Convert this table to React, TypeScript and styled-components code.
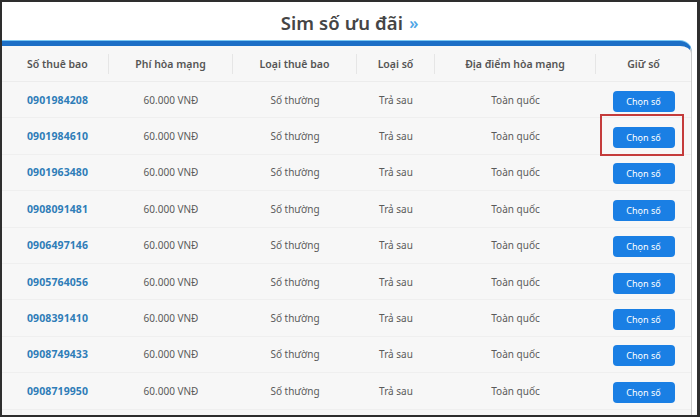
import React from "react";
import styled, { createGlobalStyle } from "styled-components";

const Global = createGlobalStyle`
  html, body { margin: 0; padding: 0; background: #fff; }
  body { font-family: "Noto Sans", "Open Sans", Arial, sans-serif; }
  * { box-sizing: border-box; }
`;

const Frame = styled.div`
  width: 700px;
  height: 417px;
  border: 2px solid #2e2e2e;
  border-right-width: 3px;
  background: #fff;
  display: flex;
  flex-direction: column;
  overflow: hidden;
`;

const TitleBar = styled.div`
  height: 39px;
  display: flex;
  align-items: center;
  justify-content: center;
  gap: 6px;
  padding-top: 2px;
`;

const Title = styled.h2`
  margin: 0;
  font-size: 18.5px;
  font-weight: 600;
  color: #454545;
  letter-spacing: 0.1px;
`;

const Chevron = styled.span`
  font-size: 16px;
  color: #4fa6e6;
  font-weight: 600;
  margin-top: 1px;
`;

const Card = styled.div`
  flex: 1;
  margin-right: 5px;
  background: #f7f7f7;
  border-top: 5px solid #1c6fc6;
  border-right: 1px solid #c9c9c9;
  border-top-right-radius: 12px;
  box-shadow: 0 -1px 0 #7cc8f3;
  display: flex;
  flex-direction: column;
  width: 690px;
`;

const cols = "107px 124px 124px 78px 161px 1fr";

const HeaderRow = styled.div`
  display: grid;
  grid-template-columns: ${cols};
  height: 36px;
  align-items: center;
  border-bottom: 1px solid #ececec;
`;

const HeadCell = styled.div<{ $left?: boolean; $last?: boolean }>`
  font-size: 10.5px;
  font-weight: 600;
  color: #555;
  text-align: ${(p) => (p.$left ? "left" : "center")};
  padding-left: ${(p) => (p.$left ? "25px" : "0")};
  border-right: ${(p) => (p.$last ? "none" : "1px solid #e6e6e6")};
  height: 20px;
  line-height: 20px;
`;

const Row = styled.div`
  display: grid;
  grid-template-columns: ${cols};
  height: 36.4px;
  align-items: center;
  border-bottom: 1px solid #efefef;
`;

const Cell = styled.div`
  font-size: 10px;
  color: #5a5a5a;
  text-align: center;
`;

const NumberCell = styled.div`
  font-size: 10.5px;
  font-weight: 700;
  color: #2f7db8;
  padding-left: 25px;
  letter-spacing: 0.1px;
`;

const ButtonCell = styled.div`
  display: flex;
  justify-content: center;
`;

const ButtonWrap = styled.div`
  position: relative;
`;

const ChooseButton = styled.button`
  width: 62px;
  height: 21px;
  border: none;
  border-radius: 4px;
  background: #1a7fe4;
  color: #fff;
  font-family: inherit;
  font-size: 9px;
  padding: 0;
  cursor: pointer;
`;

const Highlight = styled.div`
  position: absolute;
  left: -13px;
  right: -9px;
  top: -10px;
  bottom: -8px;
  border: 2px solid #c43b3b;
  pointer-events: none;
`;

const numbers = [
  "0901984208",
  "0901984610",
  "0901963480",
  "0908091481",
  "0906497146",
  "0905764056",
  "0908391410",
  "0908749433",
  "0908719950",
];

export default function App() {
  return (
    <>
      <Global />
      <Frame>
        <TitleBar>
          <Title>Sim số ưu đãi</Title>
          <Chevron>»</Chevron>
        </TitleBar>
        <Card>
          <HeaderRow>
            <HeadCell $left>Số thuê bao</HeadCell>
            <HeadCell>Phí hòa mạng</HeadCell>
            <HeadCell>Loại thuê bao</HeadCell>
            <HeadCell>Loại số</HeadCell>
            <HeadCell>Địa điểm hòa mạng</HeadCell>
            <HeadCell $last>Giữ số</HeadCell>
          </HeaderRow>
          {numbers.map((n, i) => (
            <Row key={n}>
              <NumberCell>{n}</NumberCell>
              <Cell>60.000 VNĐ</Cell>
              <Cell>Số thường</Cell>
              <Cell>Trả sau</Cell>
              <Cell>Toàn quốc</Cell>
              <ButtonCell>
                <ButtonWrap>
                  <ChooseButton>Chọn số</ChooseButton>
                  {i === 1 && <Highlight />}
                </ButtonWrap>
              </ButtonCell>
            </Row>
          ))}
        </Card>
      </Frame>
    </>
  );
}
